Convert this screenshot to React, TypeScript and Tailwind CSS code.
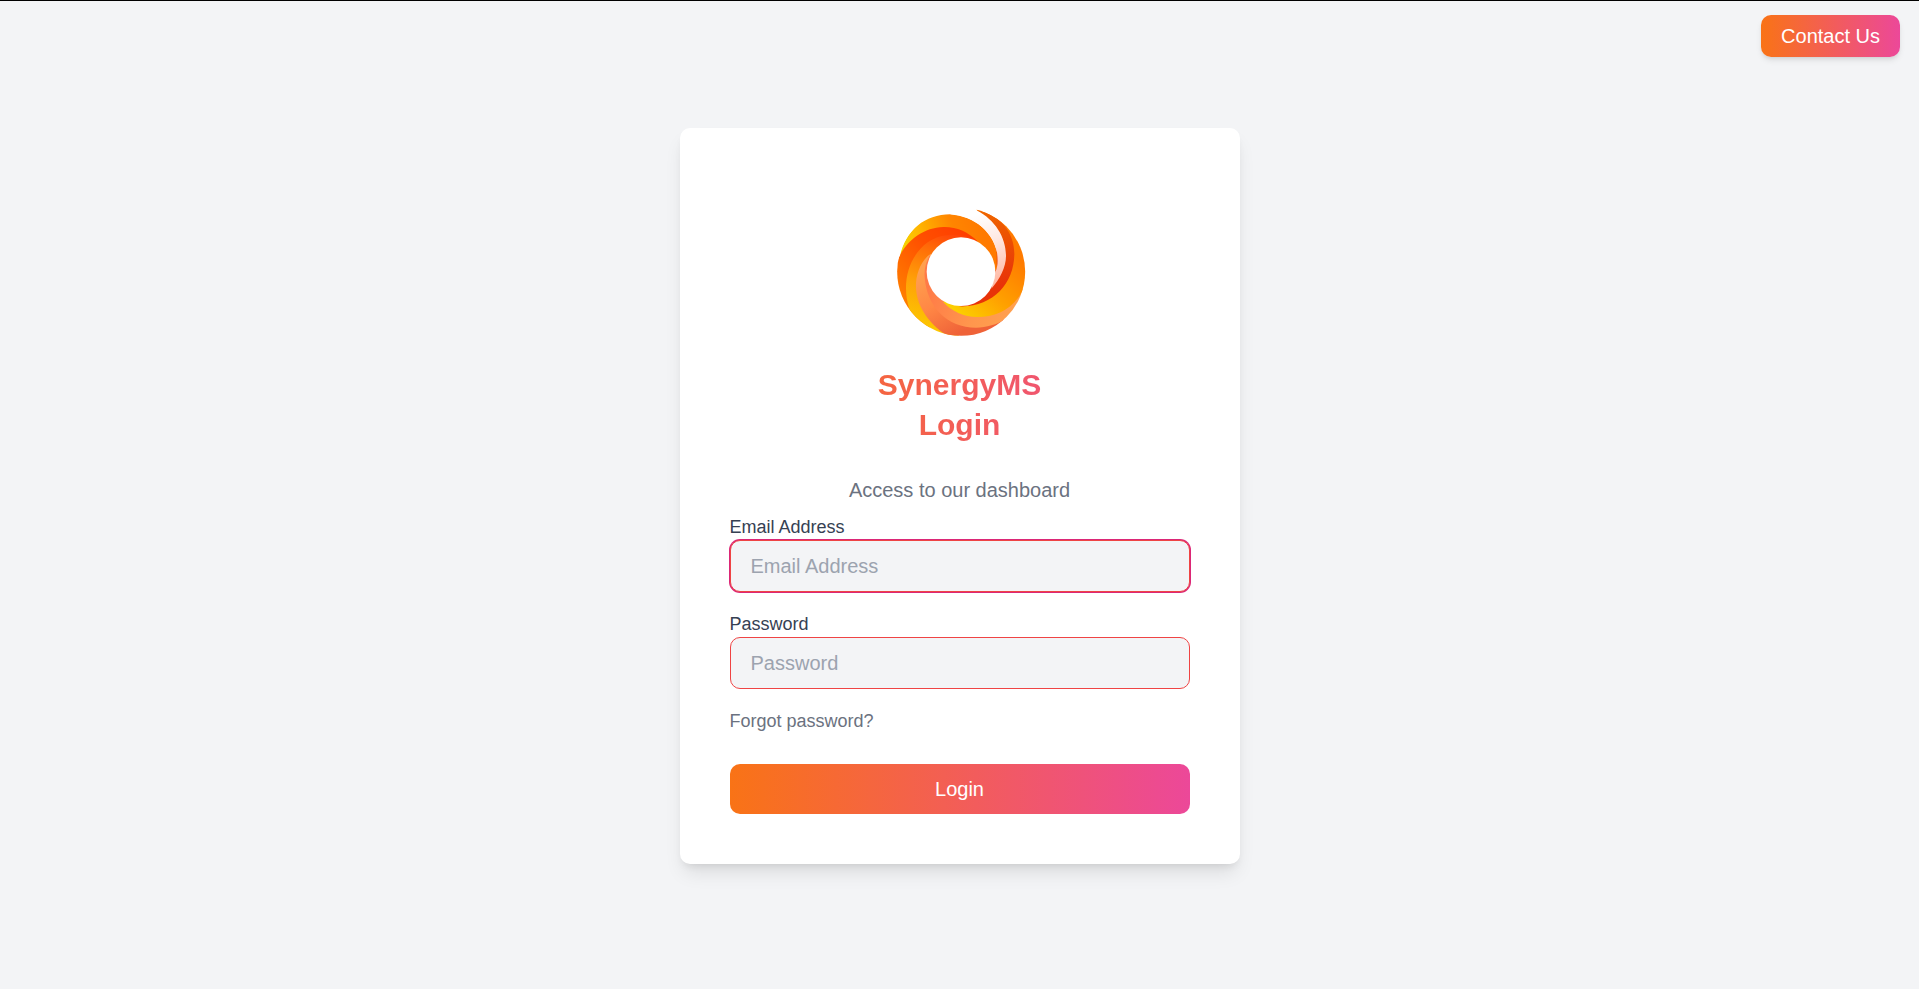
import type { ReactNode } from "react";

function Logo() {
  return (
    <svg
      viewBox="0 -51 480 561"
      className="h-[187px] w-40"
      role="img"
      aria-label="SynergyMS"
    >
      <defs>
        <clipPath id="disc">
          <circle cx="243.5" cy="230.5" r="192" />
        </clipPath>
        <linearGradient id="amber" gradientUnits="userSpaceOnUse" x1="62" y1="180" x2="300" y2="90">
          <stop offset="0" stopColor="#eedb00" />
          <stop offset="0.25" stopColor="#ffbd00" />
          <stop offset="0.7" stopColor="#ff8500" />
          <stop offset="1" stopColor="#ff7a00" />
        </linearGradient>
        <linearGradient id="flame" gradientUnits="userSpaceOnUse" x1="270" y1="110" x2="70" y2="300">
          <stop offset="0" stopColor="#ff3c00" />
          <stop offset="0.45" stopColor="#ff5000" />
          <stop offset="1" stopColor="#ff7c00" />
        </linearGradient>
        <linearGradient id="gold" gradientUnits="userSpaceOnUse" x1="230" y1="120" x2="130" y2="410">
          <stop offset="0" stopColor="#ff4308" />
          <stop offset="0.2" stopColor="#ff6a08" />
          <stop offset="0.55" stopColor="#ffa008" />
          <stop offset="1" stopColor="#fccb00" />
        </linearGradient>
        <linearGradient id="peach" gradientUnits="userSpaceOnUse" x1="120" y1="230" x2="230" y2="420">
          <stop offset="0" stopColor="#ffa04e" />
          <stop offset="0.5" stopColor="#ff8745" />
          <stop offset="1" stopColor="#ef6238" />
        </linearGradient>
        <linearGradient id="coral" gradientUnits="userSpaceOnUse" x1="150" y1="250" x2="400" y2="340">
          <stop offset="0" stopColor="#ff7a47" />
          <stop offset="0.6" stopColor="#ff964d" />
          <stop offset="1" stopColor="#ffa04f" />
        </linearGradient>
        <linearGradient id="sun" gradientUnits="userSpaceOnUse" x1="400" y1="180" x2="240" y2="360">
          <stop offset="0" stopColor="#ff7b00" />
          <stop offset="0.55" stopColor="#ffa200" />
          <stop offset="1" stopColor="#fccf00" />
        </linearGradient>
        <linearGradient id="ember" gradientUnits="userSpaceOnUse" x1="310" y1="50" x2="370" y2="270">
          <stop offset="0" stopColor="#ef6500" />
          <stop offset="1" stopColor="#e83308" />
        </linearGradient>
        <linearGradient id="blush" gradientUnits="userSpaceOnUse" x1="290" y1="60" x2="360" y2="260">
          <stop offset="0" stopColor="#ffffff" />
          <stop offset="0.4" stopColor="#ffe9e3" />
          <stop offset="1" stopColor="#ffb8a3" />
        </linearGradient>
      </defs>
      <g clipPath="url(#disc)">
        <path fill="url(#amber)" d="M60 184C76 106 135 58 211 58C295 62 356 130 355 205C355 232 350 250 340 272L244 210L90 230Z" />
        <path fill="url(#flame)" d="M54 194C78 136 130 98 190 96C230 95 262 110 292 138L244 200L170 300L140 440L20 440L20 194Z" />
        <path fill="url(#gold)" d="M112 388C66 330 58 205 143 142C190 110 250 115 292 138L244 200L200 240L220 340L240 440L112 440Z" />
        <path fill="url(#peach)" d="M152 176C126 195 111 227 108 264C105 325 140 382 202 422L202 440L374 440L374 374L240 350L180 240Z" />
        <path fill="url(#coral)" d="M150 180C138 200 132 220 134 246C140 335 202 398 288 398C320 397 350 389 378 372L440 372L440 280L310 310L190 300L170 250Z" />
        <path fill="url(#sun)" d="M290 38C374 40 440 135 440 226C438 247 436 263 429 284C402 340 350 366 292 366C252 366 215 349 189 320L240 310L340 250L370 120L290 45Z" />
        <path fill="url(#ember)" d="M290 45C361 58 404 113 403 178C402 268 336 338 238 334L310 280L350 220L350 110Z" />
        <path fill="url(#blush)" d="M211 46C240 41 265 41 292 47C344 74 377 125 378 180C379 215 360 251 334 281L346 230C355 215 353 190 351 172C339 109 285 66 211 58Z" />
      </g>
      <circle cx="243" cy="230" r="103" fill="#fff" />
    </svg>
  );
}

interface FieldProps {
  id: string;
  type: string;
  label: string;
  autoFocus?: boolean;
}

function Field({ id, type, label, autoFocus }: FieldProps) {
  return (
    <div className="flex flex-col">
      <label htmlFor={id} className="text-[18px] leading-[25px] text-gray-700">
        {label}
      </label>
      <input
        id={id}
        type={type}
        placeholder={label}
        autoFocus={autoFocus}
        className="h-[52px] w-full rounded-[10px] border border-[#ef4444] bg-[#f3f4f6] px-5 text-[20px] text-gray-700 caret-transparent outline-none placeholder:text-[#9ca3af] focus:ring-1 focus:ring-[#db2777]"
      />
    </div>
  );
}

function GradientButton({ className, type, children }: { className: string; type: "button" | "submit"; children: ReactNode }) {
  return (
    <button
      type={type}
      className={`cursor-pointer rounded-[10px] bg-[linear-gradient(to_right,#f97316,#ec4899)] px-5 text-[20px] leading-[30px] text-white ${className}`}
    >
      {children}
    </button>
  );
}

export default function App() {
  return (
    <div className="relative flex min-h-screen items-center justify-center border-t border-black bg-[#f3f4f6] pt-0.5 font-['Liberation_Sans',Arial,sans-serif]">
      <GradientButton type="button" className="absolute top-3.5 right-[19px] py-1.5 shadow-md">
        Contact Us
      </GradientButton>

      <main className="w-full max-w-[560px] rounded-[10px] bg-white p-[50px] shadow-[0_12px_19px_-4px_rgb(0_0_0/0.1),0_5px_8px_-4px_rgb(0_0_0/0.1)]">
        <div className="flex flex-col items-center">
          <Logo />
          <h1 className="w-full bg-[linear-gradient(to_right,#f97316,#ec4899)] bg-clip-text text-center text-[30px] leading-10 font-bold text-transparent">
            SynergyMS
            <br />
            Login
          </h1>
          <p className="mt-[30px] text-[20px] leading-[30px] text-[#6b7280]">
            Access to our dashboard
          </p>
        </div>

        <form className="mt-2.5 flex flex-col gap-5" onSubmit={(e) => e.preventDefault()}>
          <Field id="email" type="email" label="Email Address" autoFocus />
          <Field id="password" type="password" label="Password" />
          <a href="#forgot" className="self-start text-[18px] leading-[25px] text-[#6b7280]">
            Forgot password?
          </a>
          <GradientButton type="submit" className="mt-2.5 w-full py-2.5">
            Login
          </GradientButton>
        </form>
      </main>
    </div>
  );
}
